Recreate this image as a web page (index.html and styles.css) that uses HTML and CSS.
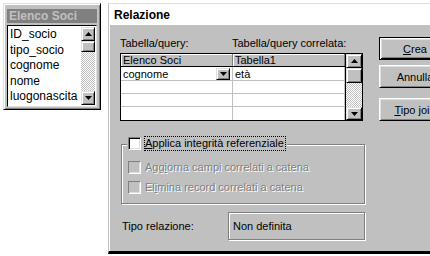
FILE: index.html
```html
<!DOCTYPE html>
<html lang="it">
<head>
  <meta charset="UTF-8" />
  <title>Relazione</title>
  <link rel="stylesheet" href="styles.css">
</head>
<body>
  <div class="fieldlist">
    <div class="fieldlist-title">Elenco Soci</div>
    <div class="fieldlist-box">
      <ul class="fields">
        <li>ID_socio</li>
        <li>tipo_socio</li>
        <li>cognome</li>
        <li>nome</li>
        <li>luogonascita</li>
      </ul>
      <div class="vscroll small">
        <div class="sbtn bevel"><svg width="7" height="4" viewBox="0 0 7 4"><polygon points="0,4 3.5,0 7,4" /></svg></div>
        <div class="thumb bevel"></div>
        <div class="track"></div>
        <div class="sbtn bevel"><svg width="7" height="4" viewBox="0 0 7 4"><polygon points="0,0 7,0 3.5,4" /></svg></div>
      </div>
    </div>
  </div>

  <div class="dialog">
    <div class="dialog-title">Relazione</div>
    <div class="dialog-body">
      <div class="main">
        <div class="labels">
          <span class="lbl1">Tabella/query:</span>
          <span>Tabella/query correlata:</span>
        </div>

        <div class="grid">
          <div class="ds">
            <div class="ds-head">
              <div class="cell">Elenco Soci</div>
              <div class="cell">Tabella1</div>
            </div>
            <div class="ds-row">
              <div class="cell">cognome
                <span class="dd bevel"><svg width="7" height="4" viewBox="0 0 7 4"><polygon points="0,0 7,0 3.5,4" /></svg></span>
              </div>
              <div class="cell">età</div>
            </div>
            <div class="ds-row"><div class="cell"></div><div class="cell"></div></div>
            <div class="ds-row"><div class="cell"></div><div class="cell"></div></div>
            <div class="ds-row"><div class="cell"></div><div class="cell"></div></div>
          </div>
          <div class="vscroll big">
            <div class="sbtn bevel"><svg width="7" height="4" viewBox="0 0 7 4"><polygon points="0,4 3.5,0 7,4" /></svg></div>
            <div class="thumb bevel"></div>
            <div class="track"></div>
            <div class="sbtn bevel"><svg width="7" height="4" viewBox="0 0 7 4"><polygon points="0,0 7,0 3.5,4" /></svg></div>
          </div>
        </div>

        <div class="group">
          <div class="legend">
            <span class="cb"></span>
            <span class="focus"><u>A</u>pplica integrità referenziale</span>
          </div>
          <div class="check disabled">
            <span class="cb"></span>
            <span>Agg<u>i</u>orna campi correlati a catena</span>
          </div>
          <div class="check disabled">
            <span class="cb"></span>
            <span>El<u>i</u>mina record correlati a catena</span>
          </div>
        </div>

        <div class="reltype">
          <span class="reltype-label">Tipo relazione:</span>
          <div class="relbox">Non definita</div>
        </div>
      </div>

      <div class="buttons">
        <button class="btn default"><u>C</u>rea</button>
        <button class="btn">Annulla</button>
        <button class="btn join"><u>T</u>ipo join</button>
      </div>
    </div>
  </div>
</body>
</html>
```

FILE: styles.css
```css
* {
  box-sizing: border-box;
}
body {
  margin: 0;
  width: 430px;
  height: 256px;
  overflow: hidden;
  background: #fff;
  font-family: "Liberation Sans", Arial, sans-serif;
  font-size: 11px;
  color: #000;
  display: flex;
  align-items: flex-start;
}
.bevel {
  background: #c0c0c0;
  border: 1px solid;
  border-color: #dfdfdf #000 #000 #dfdfdf;
  box-shadow: inset 1px 1px #fff, inset -1px -1px #808080;
}

/* field list window */
.fieldlist {
  flex: none;
  margin: 3px 0 0 3px;
  width: 98px;
  height: 107px;
  padding: 5px 3px 3px;
  background: #c0c0c0;
  border: 1px solid;
  border-color: #dfdfdf #000 #000 #dfdfdf;
  box-shadow: inset 1px 1px #fff, inset -1px -1px #808080;
  display: flex;
  flex-direction: column;
}
.fieldlist-title {
  flex: none;
  height: 14px;
  line-height: 14px;
  padding-left: 2px;
  background: #808080;
  color: #c0c0c0;
  font-size: 12px;
  font-weight: bold;
}
.fieldlist-box {
  flex: 1;
  margin-top: 2px;
  display: flex;
  background: #fff;
  border: 1px solid;
  border-color: #000 #dfdfdf #dfdfdf #000;
  padding: 1px;
}
.fields {
  flex: 1;
  list-style: none;
  margin: 0;
  padding: 0 0 0 1px;
  font-size: 12px;
  line-height: 15.5px;
  overflow: hidden;
}

/* scrollbars */
.vscroll {
  flex: none;
  display: flex;
  flex-direction: column;
}
.vscroll .sbtn {
  display: flex;
  align-items: center;
  justify-content: center;
}
.track {
  flex: 1;
  background: repeating-conic-gradient(#c0c0c0 0 25%, #fff 0 50%) 0 0 / 2px 2px;
}
.vscroll.small {
  width: 14px;
}
.vscroll.small .sbtn {
  height: 14px;
}
.vscroll.small .thumb {
  height: 11px;
}
.vscroll.big {
  width: 17px;
  border-left: 1px solid #000;
}
.vscroll.big .sbtn {
  height: 14px;
}
.vscroll.big .sbtn:last-child {
  height: 13px;
}
.vscroll.big .thumb {
  height: 15px;
}

/* dialog */
.dialog {
  flex: none;
  margin: 3px 0 0 7px;
  width: 340px;
  height: 251px;
  display: flex;
  flex-direction: column;
  background: #fff;
  border-top: 1px solid #dfdfdf;
  border-left: 1px solid #c0c0c0;
  border-bottom: 3px solid #000;
}
.dialog-title {
  flex: none;
  height: 21px;
  padding: 3px 0 0 5px;
  line-height: 17px;
  font-size: 12px;
  font-weight: bold;
}
.dialog-body {
  flex: 1;
  margin-left: 1px;
  background: #c0c0c0;
  display: flex;
  padding: 12px 0 0 10px;
}
.main {
  width: 245px;
  flex: none;
}
.labels {
  display: flex;
  line-height: 13px;
  white-space: nowrap;
}
.lbl1 {
  width: 112px;
}

/* datasheet */
.grid {
  margin-top: 3px;
  width: 243px;
  height: 68px;
  border: 1px solid #000;
  background: #fff;
  display: flex;
}
.ds {
  width: 224px;
  display: flex;
  flex-direction: column;
}
.ds-head {
  display: flex;
  height: 13px;
  background: #c0c0c0;
  border-bottom: 1px solid #000;
}
.ds-head .cell {
  width: 112px;
  line-height: 12px;
  padding-left: 2px;
  border-right: 1px solid #808080;
  box-shadow: inset 1px 1px #fff;
}
.ds-row {
  display: flex;
  height: 13px;
  border-bottom: 1px solid #c0c0c0;
}
.ds-row:nth-child(2) {
  height: 14px;
}
.ds-row:last-child {
  border-bottom: 0;
}
.ds-row .cell {
  width: 112px;
  display: flex;
  align-items: center;
  padding-left: 2px;
  border-right: 1px solid #c0c0c0;
}
.dd {
  margin-left: auto;
  margin-right: 2px;
  width: 14px;
  height: 12px;
  display: flex;
  align-items: center;
  justify-content: center;
}

/* referential integrity group */
.group {
  margin: 23px 0 0 1px;
  width: 244px;
  padding: 0 0 6px 6px;
  border: 1px solid #808080;
  box-shadow: inset 1px 1px #fff, 1px 1px #fff;
}
.legend {
  display: flex;
  align-items: center;
  width: max-content;
  margin: -9px 0 0 -1px;
  padding: 0 1px;
  background: #c0c0c0;
  height: 15px;
}
.focus {
  margin-left: 3px;
  padding-right: 1px;
  line-height: 13px;
  border: 1px dotted #000;
  white-space: nowrap;
}
.cb {
  flex: none;
  width: 13px;
  height: 13px;
  background: #fff;
  border: 1px solid;
  border-color: #808080 #fff #fff #808080;
  box-shadow: inset 1px 1px #000, inset -1px -1px #dfdfdf;
}
.check {
  display: flex;
  align-items: center;
  gap: 4px;
  height: 20px;
  white-space: nowrap;
}
.legend + .check {
  margin-top: 6px;
}
.check.disabled {
  color: #808080;
  text-shadow: 1px 1px 0 #fff;
}
.check.disabled .cb {
  background: #c0c0c0;
  box-shadow: inset 1px 1px #c0c0c0, inset -1px -1px #dfdfdf;
}

.reltype {
  margin-top: 8px;
  display: flex;
  align-items: center;
}
.reltype-label {
  width: 108px;
  padding-left: 2px;
}
.relbox {
  width: 137px;
  height: 28px;
  line-height: 26px;
  padding-left: 4px;
  border: 1px solid #808080;
  box-shadow: inset 1px 1px #fff, 1px 1px #fff;
}

/* command buttons */
.buttons {
  margin-left: 14px;
  display: flex;
  flex-direction: column;
}
.btn {
  width: 72px;
  height: 23px;
  padding: 0;
  font: inherit;
  color: #000;
  background: #c0c0c0;
  border: 1px solid;
  border-color: #fff #000 #000 #fff;
  box-shadow: inset 1px 1px #dfdfdf, inset -1px -1px #808080;
  margin-bottom: 5px;
}
.btn.default {
  border-color: #000;
  box-shadow: inset 1px 1px #fff, inset -1px -1px #000, inset 2px 2px #dfdfdf, inset -2px -2px #808080;
}
.btn.join {
  margin-top: 5px;
}
```
